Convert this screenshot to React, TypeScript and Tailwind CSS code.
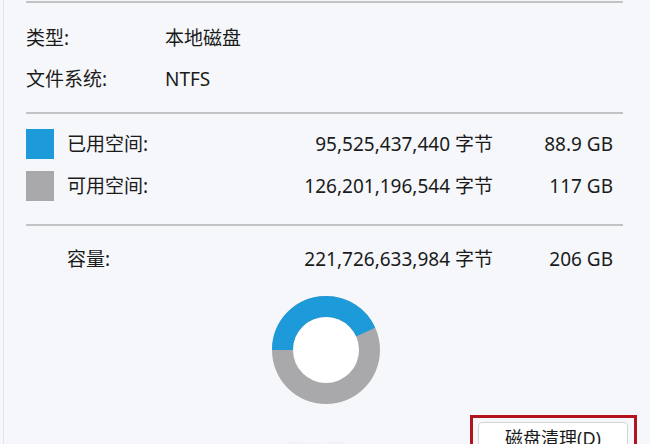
import clsx from "clsx";

type SpaceRow = {
    label: string;
    bytes: string;
    size: string;
    swatch?: string;
};

const spaceRows: SpaceRow[] = [
    { label: "已用空间:", bytes: "95,525,437,440 字节", size: "88.9 GB", swatch: "bg-[#1d9ad9]" },
    { label: "可用空间:", bytes: "126,201,196,544 字节", size: "117 GB", swatch: "bg-[#a9a9ab]" },
];

const font = "font-['Noto_Sans','Noto_Sans_CJK_SC',sans-serif]";

function Separator() {
    return <div className="h-[2px] bg-[#c3c3c6]" />;
}

function UsageDonut({ used, total }: { used: number; total: number }) {
    const r = 43.5;
    const circ = 2 * Math.PI * r;
    const usedLen = (used / total) * circ;

    return (
        <svg width="108" height="108" viewBox="0 0 108 108">
            <circle cx="54" cy="54" r="54" fill="#a9a9ab" />
            {/* used part starts at 9 o'clock and runs clockwise */}
            <circle
                cx="54"
                cy="54"
                r={r}
                fill="none"
                stroke="#1d9ad9"
                strokeWidth="21"
                strokeDasharray={`${usedLen} ${circ}`}
                transform="rotate(180 54 54)"
            />
            <circle cx="54" cy="54" r="33" fill="#ffffff" />
        </svg>
    );
}

export default function App() {
    return (
        <div className={clsx("flex h-[444px] w-[650px] overflow-hidden bg-[#f6f7fa] text-[19px] text-[#1b1b1b]", font)}>
            <div className="w-[3px] shrink-0" />
            <div className="flex-1 border-l border-[#e2e3e8] pt-[1px] pl-[22px] pr-[27px]">
                <Separator />

                {/* General info */}
                <div className="mt-[15px] flex h-[41px] items-center">
                    <span className="w-[139px]">类型:</span>
                    <span>本地磁盘</span>
                </div>
                <div className="flex h-[41px] items-center">
                    <span className="w-[139px]">文件系统:</span>
                    <span>NTFS</span>
                </div>

                <div className="mt-[12px]">
                    <Separator />
                </div>

                {/* Used / free */}
                <div className="mt-[9px]">
                    {spaceRows.map((row) => (
                        <div key={row.label} className="flex h-[42px] items-center">
                            <div className={clsx("h-[30px] w-[28px]", row.swatch)} />
                            <span className="ml-[13px] flex-1">{row.label}</span>
                            <span className="text-right">{row.bytes}</span>
                            <span className="w-[130px] pr-[10px] text-right">{row.size}</span>
                        </div>
                    ))}
                </div>

                <div className="mt-[17px]">
                    <Separator />
                </div>

                <div className="mt-[12px] flex h-[42px] items-center">
                    <span className="ml-[41px] flex-1">容量:</span>
                    <span className="text-right">221,726,633,984 字节</span>
                    <span className="w-[130px] pr-[10px] text-right">206 GB</span>
                </div>

                <div className="mt-[16px] flex justify-center pl-[3px]">
                    <UsageDonut used={88.9} total={206} />
                </div>

                {/* Bottom: drive label + cleanup button */}
                <div className="mt-[11px] -mr-[14px] flex items-start justify-end">
                    <span className="mr-auto ml-[262px] mt-[22px] text-[#eef0f3]">驱动器 C:</span>
                    <div className="h-[50px] w-[167px] border-[3px] border-[#b3131d] pl-[5px] pt-[4px]">
                        <button
                            type="button"
                            className="flex h-[32px] w-[150px] items-center justify-center rounded-[4px] border border-[#d4d4d6] bg-white text-[18px] text-[#1b1b1b]"
                        >
                            磁盘清理(D)
                        </button>
                    </div>
                </div>
            </div>
        </div>
    );
}
